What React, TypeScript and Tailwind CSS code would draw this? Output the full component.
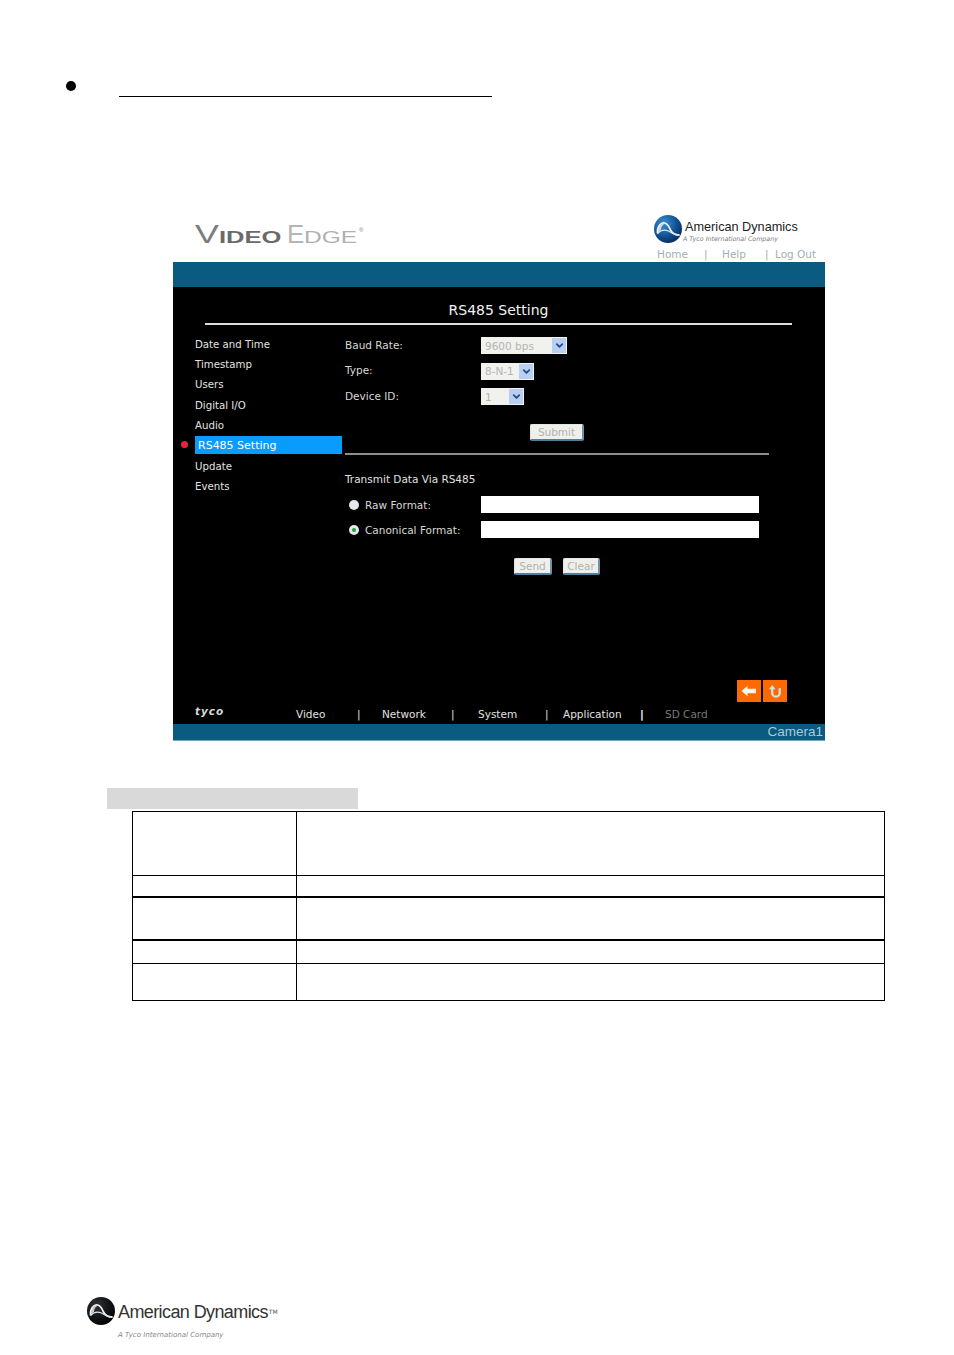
import { ChevronDown } from "lucide-react";

const menu = ["Date and Time", "Timestamp", "Users", "Digital I/O", "Audio", "RS485 Setting", "Update", "Events"];

const nav = [
  { label: "Video", cls: "w-[61px] text-[#e0e0e0]" },
  { label: "|", cls: "w-[25px] text-[#e0e0e0]" },
  { label: "Network", cls: "w-[69px] text-[#e0e0e0]" },
  { label: "|", cls: "w-[27px] text-[#e0e0e0]" },
  { label: "System", cls: "w-[67px] text-[#e0e0e0]" },
  { label: "|", cls: "w-[18px] text-[#e0e0e0]" },
  { label: "Application", cls: "w-[77px] text-[#e0e0e0]" },
  { label: "|", cls: "w-[25px] text-white font-bold" },
  { label: "SD Card", cls: "w-[60px] text-[#777]" },
];

const rows = [
  "h-[64px] border-b border-black",
  "h-[22px] border-b-2 border-black",
  "h-[43px] border-b-2 border-black",
  "h-[23px] border-b border-black",
  "h-[36px]",
];

function AdMark({ dark }: { dark?: boolean }) {
  const id = dark ? "adDark" : "adBlue";
  return (
    <svg viewBox="0 0 28 28" className="w-[28px] h-[28px] shrink-0">
      <defs>
        <radialGradient id={id} cx="0.35" cy="0.3" r="0.8">
          <stop offset="0" stopColor={dark ? "#333" : "#3f8fd0"} />
          <stop offset="0.6" stopColor={dark ? "#111" : "#0f4f8f"} />
          <stop offset="1" stopColor={dark ? "#000" : "#06264f"} />
        </radialGradient>
      </defs>
      <circle cx="14" cy="14" r="14" fill={`url(#${id})`} />
      <path d="M3.5 18.5C3 11 7 7.5 10.5 8c3.5.5 4.5 4 6 7 1.500 3 4.500 5 9 5" fill="none" stroke="#eef3f7" strokeWidth="1.700" />
      <path d="M3.500 18.500c3-3.500 7.500-4 11-2.500 3 1.500 6 4.500 11 4" fill="none" stroke="#dfe8ef" strokeWidth="1.300" />
      <path d="M4 17C4.500 11 7.500 8.500 10 9c-2 1.500-3 3.500-3 6Z" fill="#eef3f7" opacity="0.8" />
    </svg>
  );
}

function FakeSelect({ value, width }: { value: string; width: string }) {
  return (
    <div className={`${width} h-[17px] bg-[#f1f1ee] flex items-center justify-between pl-[4px] pr-[1px]`}>
      <span className="text-[10.5px] pt-[1px] text-[#b4b4b4]">{value}</span>
      <span className="w-[14px] h-[15px] bg-[#b9cff2] flex items-center justify-center">
        <ChevronDown className="w-[11px] h-[11px] text-[#2a4a88]" strokeWidth={4} />
      </span>
    </div>
  );
}

function FakeButton({ label, width }: { label: string; width: string }) {
  return (
    <div className={`${width} h-[17px] bg-[#f0f0ea] border border-[#dfe6ea] border-b-2 border-r-2 border-b-[#4f7f9f] border-r-[#6f93ab] rounded-[2px] flex items-center justify-center text-[10.5px] pt-[1px] text-[#b0b0b0]`}>
      {label}
    </div>
  );
}

function Radio({ checked }: { checked?: boolean }) {
  return (
    <span className="w-[10px] h-[10px] rounded-full bg-[#e4e8ec] flex items-center justify-center">
      {checked && <span className="w-[4px] h-[4px] rounded-full bg-[#1aa040]" />}
    </span>
  );
}

export default function App() {
  return (
    <div className="w-full h-[1355px] bg-white flex flex-col font-['DejaVu_Sans',sans-serif]">
      {/* bullet + heading rule */}
      <div className="flex items-start mt-[81px] ml-[66px] h-[134px]">
        <div className="w-[10px] h-[10px] rounded-full bg-black" />
        <div className="w-[373px] h-px bg-black mt-[15px] ml-[43px]" />
      </div>

      {/* camera screenshot */}
      <div className="ml-[173px] w-[652px]">
        <div className="h-[47px] flex justify-between">
          <div className="pl-[22px] pt-[6px] h-fit font-['Liberation_Sans',sans-serif] leading-none flex items-baseline whitespace-nowrap">
            <span className="inline-block w-[24px] origin-left scale-x-[1.38] text-[26px] text-[#7d7d7d]">V</span>
            <span className="inline-block w-[68px] origin-left scale-x-[1.5] text-[17px] font-bold text-[#6a6a6a]">IDEO</span>
            <span className="inline-block w-[17px] text-[26px] text-[#b5b5b5]">E</span>
            <span className="inline-block w-[55px] origin-left scale-x-[1.44] text-[17px] text-[#b0b0b0]">DGE</span>
            <span className="text-[6px] self-start mt-[6px] text-[#777]">®</span>
          </div>
          <div className="w-[171px] flex flex-col">
            <div className="flex">
              <AdMark />
              <div className="ml-[3px] flex flex-col">
                <span className="text-[12.7px] leading-[16px] mt-[4px] font-['Liberation_Sans',sans-serif] text-[#222] whitespace-nowrap">American Dynamics</span>
                <span className="text-[6.3px] leading-[8px] -ml-[2px] italic text-[#777] whitespace-nowrap">A Tyco International Company</span>
              </div>
            </div>
            <div className="flex pl-[3px] text-[10.5px] leading-[14px] mt-[4px] text-[#9fb0b8]">
              <span className="w-[47px]">Home</span>
              <span className="w-[18px]">|</span>
              <span className="w-[43px]">Help</span>
              <span className="w-[10px]">|</span>
              <span className="whitespace-nowrap">Log Out</span>
            </div>
          </div>
        </div>

        <div className="h-[25px] bg-[#0b5a80]" />

        <div className="h-[437px] bg-black flex flex-col">
          <div className="h-[38px] pl-[32px] pr-[33px] flex flex-col">
            <div className="flex-1 flex items-center justify-center pt-[10px] text-[14px] text-[#f2f2f2]">RS485 Setting</div>
            <div className="h-[2px] bg-[#dcdcdc]" />
          </div>

          <div className="flex flex-1">
            <div className="w-[172px] pl-[8px] pt-[8.35px] shrink-0">
              {menu.map((item) => {
                const selected = item === "RS485 Setting";
                return (
                  <div key={item} className="h-[20.3px] flex items-center">
                    <span className={selected ? "w-[7px] h-[7px] rounded-full bg-[#e8253a] mr-[7px]" : "w-[14px]"} />
                    {selected ? (
                      <span className="w-[147px] h-[18px] bg-[#0a9bff] pl-[3px] text-[11px] leading-[19px] text-white">{item}</span>
                    ) : (
                      <span className="text-[10.2px] pt-[2px] text-[#e2e2e2]">{item}</span>
                    )}
                  </div>
                );
              })}
            </div>

            <div className="flex-1 flex flex-col">
              <div className="pt-[12px] grid grid-cols-[136px_1fr] gap-y-[8.5px] items-center text-[10.5px] leading-[15px] text-[#d8d8d8]">
                <span className="pb-[1px]">Baud Rate:</span>
                <FakeSelect value="9600 bps" width="w-[86px]" />
                <span className="pb-[1px]">Type:</span>
                <FakeSelect value="8-N-1" width="w-[53px]" />
                <span className="pb-[1px]">Device ID:</span>
                <FakeSelect value="1" width="w-[43px]" />
              </div>
              <div className="ml-[185px] mt-[19px]">
                <FakeButton label="Submit" width="w-[54px]" />
              </div>
              <div className="w-[424px] h-[2px] bg-[#8c8c8c] mt-[12px]" />
              <div className="mt-[16px] text-[10.5px] leading-[16px] text-[#e0e0e0]">Transmit Data Via RS485</div>
              <div className="mt-[9px] flex items-center h-[17px] pl-[4px] text-[10.5px] text-[#d8d8d8]">
                <Radio />
                <span className="ml-[6px] pt-[2px] w-[116px]">Raw Format:</span>
                <div className="w-[278px] h-[17px] bg-white" />
              </div>
              <div className="mt-[8px] flex items-center h-[17px] pl-[4px] text-[10.5px] text-[#d8d8d8]">
                <Radio checked />
                <span className="ml-[6px] pt-[2px] w-[116px]">Canonical Format:</span>
                <div className="w-[278px] h-[17px] bg-white" />
              </div>
              <div className="mt-[20px] ml-[169px] flex gap-[11px]">
                <FakeButton label="Send" width="w-[38px]" />
                <FakeButton label="Clear" width="w-[37px]" />
              </div>
              <div className="mt-auto pr-[38px] flex justify-end gap-[2px]">
                <div className="w-[24px] h-[22px] bg-[#ff6a00] flex items-center justify-center">
                  <svg viewBox="0 0 16 12" className="w-[16px] h-[12px]">
                    <path d="M0.500 6 6.500 0.800V3.800H15V8.200H6.500V11.200Z" fill="#fff4e8" />
                  </svg>
                </div>
                <div className="w-[24px] h-[22px] bg-[#ff6a00] flex items-center justify-center">
                  <svg viewBox="0 0 16 16" className="w-[15px] h-[15px]">
                    <path d="M4.500 4.500V9.500a4 4 0 0 0 8 0V4.500" fill="none" stroke="#cfe3ee" strokeWidth="2.400" />
                    <path d="M1 5.500 4.500 1 8 5.500Z" fill="#cfe3ee" />
                  </svg>
                </div>
              </div>
            </div>
          </div>

          <div className="h-[22px] pl-[22px] flex items-center text-[10.5px]">
            <span className="w-[101px] text-[10.5px] -mt-[3px] tracking-[1px] font-bold italic text-[#d8d8d8]">tyco</span>
            {nav.map((n, i) => (
              <span key={i} className={`${n.cls} pt-[3px] whitespace-nowrap`}>{n.label}</span>
            ))}
          </div>
        </div>

        <div className="h-[17px] bg-[#0b5a80] border-b border-[#7fa5b8] flex items-center justify-end pr-[2px] text-[13.5px] text-[#a9c9d9] font-['Liberation_Sans',sans-serif]">
          Camera1
        </div>
      </div>

      {/* caption bar + empty table */}
      <div className="mt-[47px] ml-[107px] w-[251px] h-[21px] bg-[#d9d9d9]" />
      <div className="mt-[2px] ml-[132px] w-[753px] border border-black">
        {rows.map((r, i) => (
          <div key={i} className={`${r} grid grid-cols-[164px_1fr]`}>
            <div className="border-r border-black" />
            <div />
          </div>
        ))}
      </div>

      {/* footer logo */}
      <div className="mt-auto mb-[15px] ml-[87px]">
        <div className="flex items-center">
          <AdMark dark />
          <span className="ml-[3px] translate-y-[1px] text-[18px] tracking-[-0.6px] font-['Liberation_Sans',sans-serif] text-[#333]">American Dynamics</span>
          <span className="ml-[1px] text-[6px] text-[#555]">TM</span>
        </div>
        <div className="ml-[31px] mt-[5px] text-[7px] leading-[10px] italic text-[#888]">A Tyco International Company</div>
      </div>
    </div>
  );
}
